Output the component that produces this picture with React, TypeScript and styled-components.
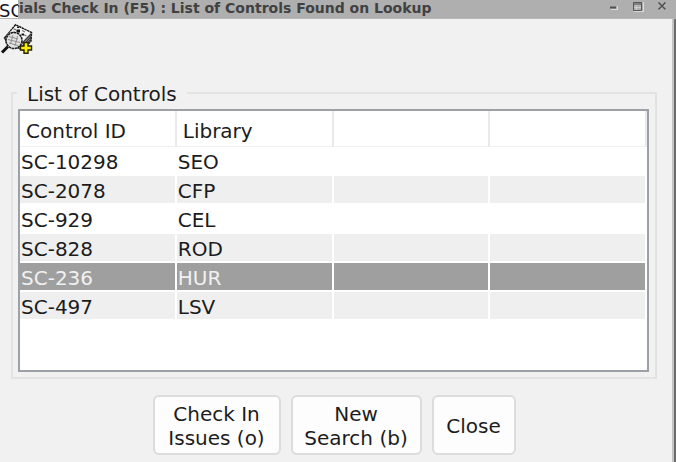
import React from "react";
import styled, { createGlobalStyle } from "styled-components";

const GlobalStyle = createGlobalStyle`
  *, *::before, *::after { box-sizing: border-box; }
  html, body, #root { height: 100%; }
  body {
    margin: 0;
    overflow: hidden;
    background: #f1f1f1;
    color: #1c1c1c;
    font-family: Verdana, "DejaVu Sans", sans-serif;
    font-size: 20px;
  }
`;

const Window = styled.div`
  display: flex;
  flex-direction: column;
  min-height: 100%;
`;

const TitleBar = styled.header`
  display: flex;
  height: 19px;
  background: #afafaf;
  border-bottom: 1px solid #b8b8b8;
`;

const Tag = styled.span`
  flex: none;
  width: 18px;
  height: 18px;
  overflow: hidden;
  background: #fff;
  color: #16162a;
  font-size: 18px;
  line-height: 21px;
  text-indent: -1px;
`;

const Title = styled.h1`
  flex: 1;
  margin: 0;
  min-width: 0;
  overflow: hidden;
  white-space: nowrap;
  color: #414141;
  font-size: 14px;
  line-height: 16px;
  text-indent: -6px;
`;

const WindowControls = styled.div`
  display: flex;
  gap: 12px;
  padding-right: 8px;
`;

const ControlButton = styled.button`
  display: flex;
  width: 12px;
  height: 14px;
  padding: 0;
  border: 0;
  background: none;
`;

const Body = styled.main`
  flex: 1;
  display: flex;
  flex-direction: column;
  padding: 4px 17px 7px 11px;
  border-right: 2px solid #6c6c6c;
  box-shadow: inset -2px 0 0 #c4c4c4;
`;

const ToolButton = styled.button`
  display: flex;
  align-self: flex-start;
  width: 34px;
  height: 32px;
  margin-left: -11px;
  padding: 0;
  border: 0;
  background: none;
`;

const Group = styled.fieldset`
  min-width: 0;
  margin: 26px 0 0;
  padding: 5px 6px 5px 5px;
  border: 2px solid #e3e3e3;
`;

const Legend = styled.legend`
  margin-left: -1px;
  padding: 3px 10px 0 10px;
  line-height: 20px;
`;

const TableFrame = styled.div`
  min-height: 263px;
  border: 2px solid #9ba1a6;
  background: #fff;
`;

const Table = styled.table`
  width: 100%;
  table-layout: fixed;
  border-collapse: separate;
  border-spacing: 0;
`;

const HeadCell = styled.th`
  height: 36px;
  padding: 4px 6px 0;
  border-right: 2px solid #e9e9e9;
  border-bottom: 1px solid #f0f0f0;
  font-weight: 400;
  line-height: 24px;
  text-align: left;
`;

type Tone = "plain" | "shaded" | "selected";

const toneColors: Record<Tone, string> = {
  plain: "#ffffff",
  shaded: "#efefef",
  selected: "#9f9f9f",
};

const Row = styled.tr<{ $tone: Tone }>`
  background: ${(p) => toneColors[p.$tone]};
  color: ${(p) => (p.$tone === "selected" ? "#f1f1f1" : "inherit")};
`;

const Cell = styled.td`
  height: 29px;
  padding: 3px 1px 0;
  border-right: 2px solid #fff;
  border-bottom: 2px solid #fff;
  line-height: 24px;
`;

const Actions = styled.div`
  display: flex;
  justify-content: center;
  gap: 10px;
  margin-top: 16px;
`;

const ActionButton = styled.button<{ $width: number }>`
  width: ${(p) => p.$width}px;
  height: 60px;
  padding: 2px 0 0;
  border: 2px solid #dcdcdc;
  border-radius: 6px;
  background: #fdfdfd;
  color: #1c1c1c;
  font-family: inherit;
  font-size: 20px;
  line-height: 24px;
  white-space: nowrap;
`;

const columns = ["Control ID", "Library", "", ""];

const rows: { id: string; library: string; tone: Tone }[] = [
  { id: "SC-10298", library: "SEO", tone: "plain" },
  { id: "SC-2078", library: "CFP", tone: "shaded" },
  { id: "SC-929", library: "CEL", tone: "plain" },
  { id: "SC-828", library: "ROD", tone: "shaded" },
  { id: "SC-236", library: "HUR", tone: "selected" },
  { id: "SC-497", library: "LSV", tone: "shaded" },
];

function LookupIcon() {
  return (
    <svg width="34" height="32" viewBox="0 0 34 32" aria-hidden="true">
      <path d="M4.500 15 L15.500 1.800 L31.500 9.500 L31 18 L23 27 L8 21 Z" fill="#dcdcdc" stroke="#1c1c1c" strokeWidth="1.500" strokeDasharray="2.500 .5" />
      <path d="M6.500 13 L16 3 L30 9.800 L22 19 Z" fill="#f8f8f8" />
      <path d="M31 11 L22 20.500 M31 13.500 L22.500 23 M31 16 L23 25.500" stroke="#333" strokeWidth="1.200" fill="none" />
      <path d="M10.500 9 l3.500 1.500 M13.500 5.800 l2.500 1 M23.500 11.500 l3 1.500 M19 13.500 l3 1.500 M22 7.500 l3 1.500" stroke="#777" strokeWidth="1.300" />
      <path d="M16.500 6.500 h3.500 v3 h-3.500z M21.500 10.500 h2.500 v2 h-2.500z M17 3.800 h2 v1.200 h-2z M13 8.800h2v1.500h-2z" fill="#111" />
      <path d="M8 23.500 L2 29.500" stroke="#111" strokeWidth="3" />
      <circle cx="14" cy="17.500" r="8" fill="#e4e4e4" stroke="#1c1c1c" strokeWidth="1.600" strokeDasharray="2.500 .6" />
      <path d="M9 13.500 l9 2.500 M8 16.500 l12 3 M9 20 l9 2.500 M13 12 l-2.500 9 M17.500 13 l-2.500 10" stroke="#8c8c8c" strokeWidth="1" />
      <path d="M24 19.500h4v3.500h3.500v4H28v3.300h-4V27h-3.500v-4H24z" fill="#ffee00" stroke="#262600" strokeWidth="1.400" />
    </svg>
  );
}

export default function App() {
  return (
    <>
      <GlobalStyle />
      <Window>
        <TitleBar>
          <Tag>SC</Tag>
          <Title>rials Check In (F5) : List of Controls Found on Lookup</Title>
          <WindowControls>
            <ControlButton aria-label="Minimize">
              <svg width="12" height="14" aria-hidden="true">
                <path d="M3 9.500h7M9.500 6v3" stroke="#dadada" />
                <path d="M2 7.500h6" stroke="#505050" strokeWidth="2" />
              </svg>
            </ControlButton>
            <ControlButton aria-label="Maximize">
              <svg width="12" height="14" aria-hidden="true">
                <path d="M2 11.500h9.500V2" stroke="#dadada" fill="none" />
                <path d="M1.500 2.500h8v8h-8zM1.500 4h8" stroke="#555" fill="none" />
                <path d="M4.500 5v5M2 7.500h7" stroke="#ccc" />
              </svg>
            </ControlButton>
            <ControlButton aria-label="Close window">
              <svg width="12" height="14" aria-hidden="true">
                <path d="M3 3.500l7 7M10 3.500l-7 7" stroke="#d4d4d4" />
                <path d="M2.500 2.500l7 7M9.500 2.500l-7 7" stroke="#505050" strokeWidth="1.600" />
              </svg>
            </ControlButton>
          </WindowControls>
        </TitleBar>
        <Body>
          <ToolButton aria-label="Look up controls">
            <LookupIcon />
          </ToolButton>
          <Group>
            <Legend>List of Controls</Legend>
            <TableFrame>
              <Table>
                <thead>
                  <tr>
                    {columns.map((name, i) => (
                      <HeadCell key={i} scope="col">{name}</HeadCell>
                    ))}
                  </tr>
                </thead>
                <tbody>
                  {rows.map((row) => (
                    <Row key={row.id} $tone={row.tone} aria-selected={row.tone === "selected"}>
                      <Cell>{row.id}</Cell>
                      <Cell>{row.library}</Cell>
                      <Cell />
                      <Cell />
                    </Row>
                  ))}
                </tbody>
              </Table>
            </TableFrame>
          </Group>
          <Actions>
            <ActionButton $width={128}>Check In<br />Issues (o)</ActionButton>
            <ActionButton $width={131}>New<br />Search (b)</ActionButton>
            <ActionButton $width={84}>Close</ActionButton>
          </Actions>
        </Body>
      </Window>
    </>
  );
}
